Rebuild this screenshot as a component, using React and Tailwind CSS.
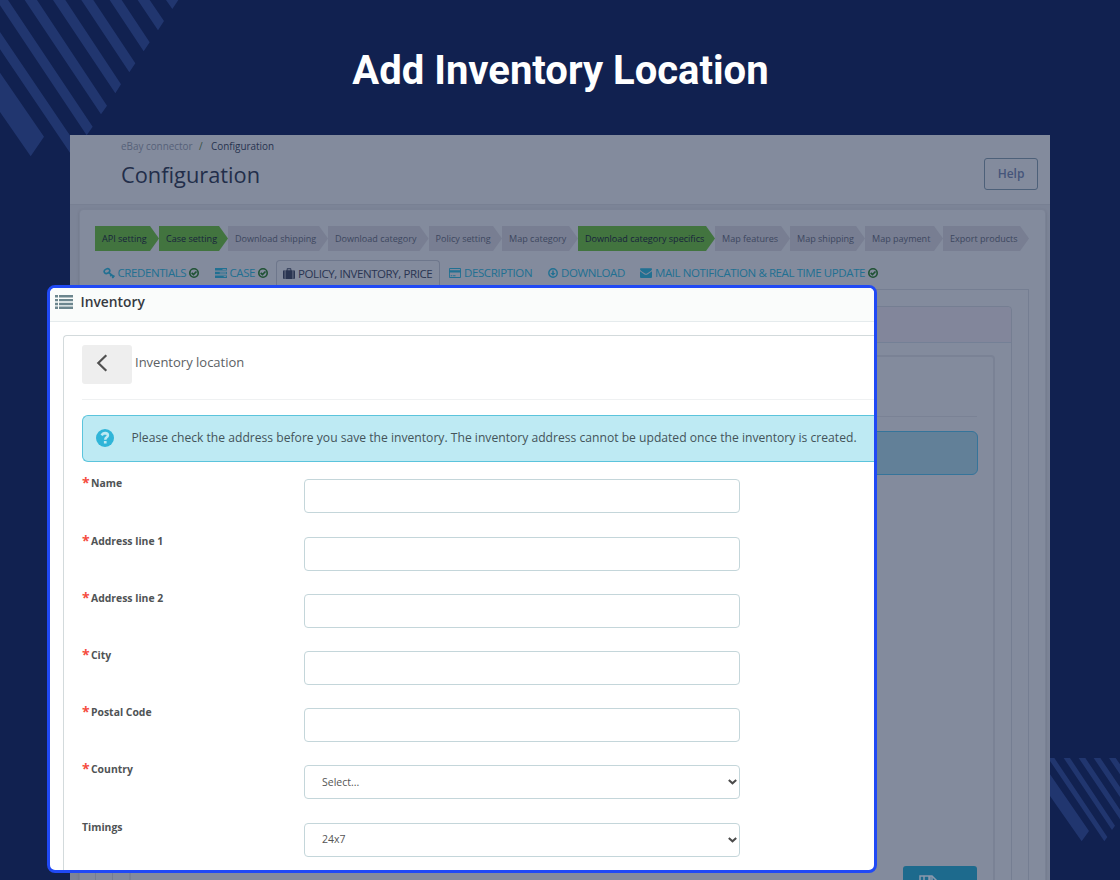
// App.jsx
import React, { useState } from 'react';

const steps = [
  { label: 'API setting', width: 'w-[64px]', done: true },
  { label: 'Case setting', width: 'w-[69px]', done: true },
  { label: 'Download shipping', width: 'w-[100px]' },
  { label: 'Download category', width: 'w-[100.5px]' },
  { label: 'Policy setting', width: 'w-[73.5px]' },
  { label: 'Map category', width: 'w-[76px]' },
  { label: 'Download category specifics', width: 'w-[137px]', done: true },
  { label: 'Map features', width: 'w-[75px]' },
  { label: 'Map shipping', width: 'w-[75px]' },
  { label: 'Map payment', width: 'w-[78px]' },
  { label: 'Export products', width: 'w-[86px]' }
];

const fields = [
  { name: 'name', label: 'Name', required: true },
  { name: 'address1', label: 'Address line 1', required: true },
  { name: 'address2', label: 'Address line 2', required: true },
  { name: 'city', label: 'City', required: true },
  { name: 'postalCode', label: 'Postal Code', required: true },
  { name: 'country', label: 'Country', required: true, options: ['Select...'] },
  { name: 'timings', label: 'Timings', options: ['24x7'] }
];

const KeyIcon = () => (
  <svg viewBox="0 0 12 12" className="w-[12px] h-[12px]" fill="none" stroke="currentColor">
    <ellipse cx="4" cy="4.100" rx="2.900" ry="2.200" strokeWidth="1.600" transform="rotate(-25 4 4.100)" />
    <path d="M5.500 5.400L11 10" strokeWidth="1.700" />
    <path d="M7.300 9.300L8.700 7.500M9.300 11L11.300 8.600" strokeWidth="1.600" />
  </svg>
);

const TasksIcon = () => (
  <svg viewBox="0 0 12 10" className="w-[12px] h-[10px]" fill="currentColor">
    <path d="M0 0h12v2.6H0zM0 3.7h12v2.6H0zM0 7.4h12V10H0z" />
    <path d="M7.5 .9h3.7v.8H7.5zM4.7 4.6h6.5v.8H4.7zM8.7 8.3h2.5v.8H8.7z" fill="#838b9d" />
  </svg>
);

const SuitcaseIcon = () => (
  <svg viewBox="0 0 12 11" className="w-[12px] h-[11px]" fill="currentColor">
    <path d="M0 3.4Q0 2.3 1.1 2.3h.6V11h-.6Q0 11 0 9.9zM12 3.4Q12 2.3 10.9 2.3h-.6V11h.6Q12 11 12 9.9z" />
    <path d="M2.4 2.3h1.3V1Q3.700 .3 4.400 .3h3.200Q8.300 .3 8.300 1v1.300h1.300V11H2.400zM4.600 1.200v1.100h2.800V1.200z" fillRule="evenodd" />
  </svg>
);

const CardIcon = () => (
  <svg viewBox="0 0 12 10" className="w-[12px] h-[10px]" fill="currentColor">
    <path d="M1 0h10q1 0 1 1v8q0 1-1 1H1Q0 10 0 9V1Q0 0 1 0zM.9 .9v1.400h10.200V.9zM.9 4.600v4.500h10.200V4.600z" fillRule="evenodd" />
    <path d="M1.700 7.300h1.600v.9H1.700zM4.100 7.300h2.400v.9H4.100z" />
  </svg>
);

const DownIcon = () => (
  <svg viewBox="0 0 10 10" className="w-[10px] h-[10px]" fill="none" stroke="currentColor">
    <circle cx="5" cy="5" r="4.200" strokeWidth="1.400" />
    <path d="M5 2.400v3" strokeWidth="1.500" />
    <path d="M2.500 4.900h5L5 7.700z" fill="currentColor" stroke="none" />
  </svg>
);

const MailIcon = () => (
  <svg viewBox="0 0 12 10" className="w-[12px] h-[10px]" fill="currentColor">
    <path d="M0 1Q0 .3 .8 .3h10.400q.8 0 .8 .7Q12 2 10.800 2.900L7 5.500Q6 6.100 5 5.500L1.200 2.900Q0 2 0 1z" />
    <path d="M0 3.200l4.600 3.200q1.400 .9 2.800 0L12 3.200V9q0 1-1 1H1Q0 10 0 9z" />
  </svg>
);

const CheckIcon = () => (
  <svg viewBox="0 0 10 10" className="w-[10px] h-[10px] text-[#1f5233]" fill="none" stroke="currentColor">
    <circle cx="5" cy="5" r="4.200" strokeWidth="1.600" />
    <path d="M2.700 4.800L4.500 6.600L7.500 3.500" strokeWidth="1.700" />
  </svg>
);

const ListIcon = () => (
  <svg viewBox="0 0 18 14" className="w-[18px] h-[14px] -mt-px" fill="#6c868e">
    <path d="M0 0h3v2.400H0zM0 3.900h3v2.400H0zM0 7.800h3v2.400H0zM0 11.600h3V14H0z" />
    <path d="M4 0h14v2.400H4zM4 3.900h14v2.400H4zM4 7.800h14v2.400H4zM4 11.600h14V14H4z" />
  </svg>
);

const tabs = [
  { label: 'CREDENTIALS', icon: KeyIcon, box: 'ml-[7.5px] w-[112px]', text: 'w-[68.5px]', done: true },
  { label: 'CASE', icon: TasksIcon, box: 'w-[61.5px]', text: 'w-[25px]', done: true },
  { label: 'POLICY, INVENTORY, PRICE', icon: SuitcaseIcon, box: 'w-[164px]', text: 'w-[136px]', active: true },
  { label: 'DESCRIPTION', icon: CardIcon, box: 'ml-[9px] w-[99px]', text: 'w-[69px]' },
  { label: 'DOWNLOAD', icon: DownIcon, box: 'w-[92px]', text: 'w-[64px]' },
  { label: 'MAIL NOTIFICATION & REAL TIME UPDATE', icon: MailIcon, box: '', text: 'w-[210px]', done: true }
];

const Stripes = () => (
  <>
    <svg className="absolute left-0 top-0 w-[180px] h-[160px]" viewBox="0 0 540 480" fill="#21366f">
      <path d="M498 0h37l-18 27zM413 0h36l43 63-18 28zM329 0h36l84 127-18 27zM244 0h36l126 190-18 27zM159 0h37l167 253-17 27zM74 0h37l210 317-18 26z" />
      <path d="M0 0h24l254 380-18 26L0 16zM0 96l235 347-18 26L0 148zM0 218l132 192-40 59L0 336z" />
    </svg>
    <svg className="absolute right-0 bottom-0 w-[70px] h-[140px]" viewBox="570 0 210 420" fill="#21366f">
      <path d="M570 103l117 170-22 31-95-136zM570 54h13l159 237-9 13-163-241zM611 54h19l135 203-9 13zM656 54h20l104 155v29zM701 54h20l59 87v30zM747 54h20l13 19v30z" />
    </svg>
  </>
);

const ConfigurationPage = () => (
  <div className="mx-[70px] h-[745px] bg-[#7c8497] overflow-hidden">
    <div className="h-[70px] bg-[#838b9d] border-b border-[#788093] flex justify-between pl-[51px] pr-[12px]">
      <div>
        <div className="flex text-[9.9px] leading-[14px] pt-[4px] text-[#566179]">
          <span className="w-[78px]">eBay connector</span>
          <span className="w-[12px] text-[#35503f]">/</span>
          <span className="text-[#27334f]">Configuration</span>
        </div>
        <h2 className="text-[21.8px] leading-[30px] mt-[7px] text-[#222e4a]">Configuration</h2>
      </div>
      <button className="mt-[23px] w-[54px] h-[32px] border border-[#4d6079] rounded-[3px] text-[12px] font-semibold text-[#45557a]">
        Help
      </button>
    </div>

    <div className="mt-[4px] ml-[9px] mr-[4px] h-[700px] bg-[#838b9d] border border-[#7a8295] rounded-[4px] pl-[15px] pr-[16px] pt-[16px] shadow-sm">
      <div className="flex h-[25px]">
        {steps.map(step => (
          <div key={step.label} className={`${step.width} shrink-0`}>
            <div
              className={`h-full flex items-center pl-[7px] text-[9.05px] whitespace-nowrap [clip-path:polygon(0_0,calc(100%_-_9px)_0,100%_50%,calc(100%_-_9px)_100%,0_100%)] ${
                step.done ? 'bg-[#42743f] text-[#17233c]' : 'bg-[#787e92] text-[#3d475f]'
              }`}
            >
              {step.label}
            </div>
          </div>
        ))}
      </div>

      <div className="flex h-[29px] mt-[8.5px] text-[11.5px] tracking-[-0.41px] text-[#217092]">
        {tabs.map(tab => (
          <div
            key={tab.label}
            className={`flex items-center gap-[3px] pb-[2px] shrink-0 whitespace-nowrap ${tab.box} ${
              tab.active ? 'border border-b-0 border-[#6e778c] rounded-t-[4px] pl-[6px] text-[#2a3552]' : ''
            }`}
          >
            <tab.icon />
            <span className={tab.text}>{tab.label}</span>
            {tab.done && <CheckIcon />}
          </div>
        ))}
      </div>

      <div className="h-[640px] border border-[#757e92] px-[16px] pt-[16px]">
        <div className="h-[640px] border border-[#757e92] rounded-[4px]">
          <div className="h-[36px] bg-[#82869b] border-b border-[#748096] rounded-t-[4px]" />
          <div className="mt-[12px] mx-[16px] h-[600px] border-2 border-[#7a8295] rounded-[4px] px-[16px]">
            <div className="h-[60px] border-b border-[#7a8295]" />
            <div className="mt-[14px] -mr-px h-[44.5px] bg-[#628098] border border-[#35749a] rounded-[6px]" />
            <div className="flex justify-end mt-[391px]">
              <button className="w-[74px] h-[50px] bg-[#1d6a8d] rounded-[3px] pl-[16px] pt-[9px] flex">
                <svg viewBox="0 0 20 20" className="w-[20px] h-[20px]" fill="none" stroke="#8a98ac" strokeWidth="1.500">
                  <path d="M1 1h12l6 6v12H1z" />
                  <path d="M5 1v6h8V1" />
                  <path d="M10.500 1v4.500" strokeWidth="2.500" />
                </svg>
              </button>
            </div>
          </div>
        </div>
      </div>
    </div>
  </div>
);

const Field = ({ field, value, onChange }) => {
  const control = 'w-[436px] h-[34px] border border-[#c4d6da] rounded-[4px] bg-white px-[17px] text-[10.5px] text-[#555] outline-none';

  return (
    <div className="flex h-[57.2px]">
      <label htmlFor={field.name} className="w-[222px] flex gap-[3px] text-[10.4px] leading-[15px] font-bold text-[#4f5355]">
        {field.required && <span className="w-[6px] -mt-px text-[14px] text-[#f54c3e]">*</span>}
        {field.label}
      </label>
      <div className="relative mt-[3px] w-[436px] h-[34px]">
        {field.options ? (
          <>
            <select id={field.name} value={value} onChange={onChange} className={`${control} appearance-none pt-px`}>
              {field.options.map(option => (
                <option key={option}>{option}</option>
              ))}
            </select>
            <svg viewBox="0 0 9 6" className="absolute right-[3.500px] top-[14px] w-[9px] h-[6px]" fill="none" stroke="#4a4a4a" strokeWidth="2">
              <path d="M.8 1L4.500 4.300L8.200 1" />
            </svg>
          </>
        ) : (
          <input id={field.name} type="text" value={value} onChange={onChange} className={control} />
        )}
      </div>
    </div>
  );
};

const InventoryPanel = () => {
  const [values, setValues] = useState({ country: 'Select...', timings: '24x7' });

  const handleChange = (name, value) => {
    setValues(prev => ({ ...prev, [name]: value }));
  };

  return (
    <div className="absolute left-[47px] top-[285px] w-[830px] h-[588px] border-[3px] border-[#2049f5] rounded-[8px] bg-white overflow-hidden">
      <div className="h-[34px] bg-[#fafcfb] border-b border-[#e5ebed] flex items-center gap-[7.5px] pl-[5px] pb-[4px]">
        <ListIcon />
        <h3 className="text-[13.8px] font-semibold text-[#363a41]">Inventory</h3>
      </div>

      <div className="mt-[13px] ml-[13px] h-[560px] border-t border-l border-[#d3dadc] rounded-tl-[4px] pl-[18px]">
        <div className="flex h-[64px] pt-[9px] border-b border-[#eff1f2]">
          <button className="w-[50px] h-[39px] bg-[#eee] rounded-[3px] pl-[14px]">
            <svg viewBox="0 0 12 18" className="w-[12px] h-[18px] -mt-[4px]" fill="none" stroke="#505050" strokeWidth="2.200">
              <path d="M10.300 1.300L2.300 9l8 7.700" />
            </svg>
          </button>
          <span className="ml-[3px] mt-[7px] text-[13px] leading-[20px] text-[#5c6164]">Inventory location</span>
        </div>

        <div className="mt-[15px] h-[47px] bg-[#beeaf3] border border-r-0 border-[#5bc4dc] rounded-l-[6px] flex items-center pl-[13px]">
          <svg viewBox="0 0 18 18" className="w-[18px] h-[18px] -mt-px shrink-0">
            <circle cx="9" cy="9" r="9" fill="#30b5d8" />
            <path d="M5.700 6.300Q6.800 4.100 9.200 4.100Q11.900 4.300 11.900 6.300Q11.900 7.500 10.500 8.300Q9.300 9 9.300 10.700" fill="none" stroke="#beeaf3" strokeWidth="2.600" />
            <path d="M7.900 11.900h2.700v2.700H7.900z" fill="#beeaf3" />
          </svg>
          <p className="ml-[17.500px] text-[12.14px] whitespace-nowrap text-[#44545a]">
            Please check the address before you save the inventory. The inventory address cannot be updated once the inventory is created.
          </p>
        </div>

        <div className="mt-[14.400px]">
          {fields.map(field => (
            <Field
              key={field.name}
              field={field}
              value={values[field.name] || ''}
              onChange={e => handleChange(field.name, e.target.value)}
            />
          ))}
        </div>
      </div>
    </div>
  );
};

const App = () => {
  return (
    <div className="relative w-[1120px] h-[880px] overflow-hidden bg-[#112150] font-['Open_Sans',sans-serif]">
      <Stripes />
      <h1 className="relative h-[135px] pt-[47px] pl-px text-center text-[40px] leading-[48px] font-bold text-white font-['Roboto',sans-serif]">
        Add Inventory Location
      </h1>
      <div className="relative">
        <ConfigurationPage />
      </div>
      <InventoryPanel />
    </div>
  );
};

export default App;
